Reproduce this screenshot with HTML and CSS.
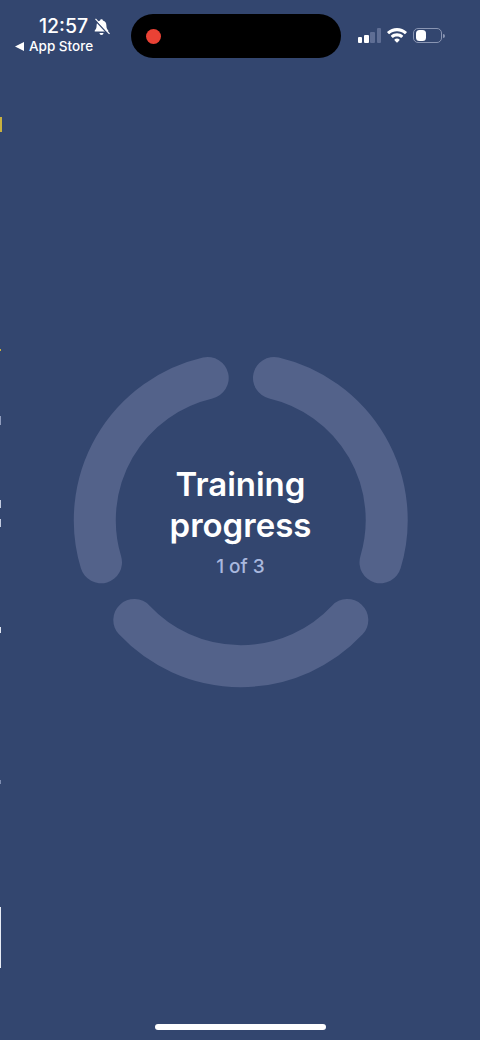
FILE: index.html
```html
<!DOCTYPE html>
<html lang="en">
<head>
<meta charset="utf-8">
<title>Training progress</title>
<link rel="stylesheet" href="styles.css">
</head>
<body>
<div class="page">
  <header class="status">
    <div class="status-left">
      <div class="clock">
        <span class="time">12:57</span>
        <svg class="bell" viewBox="0 0 17 18" aria-hidden="true">
          <path class="fill" d="M8.5 1.2c.8 0 1.3.5 1.4 1.2 2.4.6 3.500 2.600 3.500 5 0 2.600.7 3.800 1.800 5 .4.500.1 1.200-.6 1.200H2.400c-.7 0-1-.7-.6-1.200 1.100-1.200 1.800-2.400 1.800-5 0-2.400 1.100-4.400 3.500-5 .1-.7.6-1.200 1.400-1.200z"/>
          <path class="fill" d="M6.500 15h4c0 1.100-.9 2-2 2s-2-.9-2-2z"/>
          <path class="cut" d="M1.500 1.500l14 15"/>
          <path class="slash" d="M2.500.8l14 15"/>
        </svg>
      </div>
      <div class="back">
        <svg class="back-arrow" viewBox="0 0 8 8" aria-hidden="true"><path d="M8 0v8L0 4z"/></svg>
        <span>App Store</span>
      </div>
    </div>
    <div class="island"><span class="rec"></span></div>
    <div class="status-right">
      <div class="signal">
        <span class="bar b1"></span>
        <span class="bar b2"></span>
        <span class="bar b3 dim"></span>
        <span class="bar b4 dim"></span>
      </div>
      <svg class="wifi" viewBox="0 0 20 15" aria-hidden="true">
        <path d="M10 0c3.700 0 7.100 1.400 9.700 3.800.2.200.2.500 0 .7l-1.500 1.500c-.2.200-.5.200-.7 0C15.500 4.200 12.900 3.200 10 3.200S4.500 4.200 2.500 6c-.2.200-.5.200-.7 0L.3 4.500c-.2-.2-.2-.5 0-.7C2.900 1.400 6.300 0 10 0z"/>
        <path d="M10 5.300c2.300 0 4.400.8 6 2.300.2.200.2.500 0 .7l-1.500 1.500c-.2.200-.5.200-.7 0-1-.9-2.300-1.400-3.800-1.400s-2.800.5-3.800 1.400c-.2.200-.5.200-.7 0L4 8.300c-.2-.2-.2-.5 0-.7 1.600-1.500 3.700-2.300 6-2.300z"/>
        <path d="M10 10.500c1 0 1.900.4 2.500 1 .2.200.2.500 0 .7l-2.100 2.200c-.2.200-.6.200-.8 0l-2.100-2.200c-.2-.2-.2-.5 0-.7.600-.6 1.500-1 2.500-1z"/>
      </svg>
      <div class="battery">
        <div class="battery-body"><span class="battery-level"></span></div>
        <span class="battery-nub"></span>
      </div>
    </div>
  </header>

  <main class="stage">
    <svg class="ring" viewBox="60 340 360 360" aria-hidden="true">
      <path d="M101 562.300A146 146 0 0 1 207.700 378"/>
      <path d="M274 378A146 146 0 0 1 380.500 562.300"/>
      <path d="M347.300 620A146 146 0 0 1 134.300 620"/>
    </svg>
    <div class="caption">
      <h1 class="title">Training<br>progress</h1>
      <p class="count">1 of 3</p>
    </div>
  </main>

  <footer class="home"><span class="home-bar"></span></footer>

  <div class="edge">
    <span class="mark m1"></span>
    <span class="mark m2"></span>
    <span class="mark m3"></span>
    <span class="mark m4"></span>
    <span class="mark m5"></span>
    <span class="mark m6"></span>
    <span class="mark m7"></span>
    <span class="mark m8"></span>
  </div>
</div>
</body>
</html>
```

FILE: styles.css
```css
* { box-sizing: border-box; }
html, body { margin: 0; padding: 0; }
body {
  width: 480px;
  height: 1040px;
  overflow: hidden;
  background: #33466f;
  font-family: Inter, "Liberation Sans", sans-serif;
  color: #fff;
}
.page {
  position: relative;
  display: flex;
  flex-direction: column;
  width: 480px;
  height: 1040px;
}

/* status bar */
.status {
  display: flex;
  align-items: flex-start;
  height: 58px;
  padding: 14px 0 0 15px;
  flex: none;
}
.status-left {
  display: flex;
  flex-direction: column;
  width: 116px;
  flex: none;
}
.clock {
  display: flex;
  align-items: center;
  height: 24px;
  padding: 1px 0 0 24px;
}
.time {
  font-size: 19.500px;
  font-weight: 500;
  line-height: 23px;
}
.bell {
  width: 17px;
  height: 18px;
  margin: 1px 0 0 5px;
  flex: none;
}
.bell .fill { fill: #fff; }
.bell .cut { stroke: #33466f; stroke-width: 1.4; fill: none; }
.bell .slash { stroke: #fff; stroke-width: 1.2; fill: none; }
.back {
  display: flex;
  align-items: center;
  height: 16px;
  font-size: 13.500px;
  font-weight: 500;
  line-height: 16px;
}
.back-arrow {
  width: 9px;
  height: 9px;
  margin: 0 5px 0 0;
  fill: #fff;
  flex: none;
}
.island {
  display: flex;
  align-items: center;
  width: 210px;
  height: 44px;
  padding-left: 15px;
  border-radius: 22px;
  background: #000;
  flex: none;
}
.rec {
  width: 15px;
  height: 15px;
  border-radius: 50%;
  background: #ea4235;
}
.status-right {
  display: flex;
  align-items: flex-end;
  height: 29px;
  margin: 0 0 0 17px;
}
.signal {
  display: flex;
  align-items: flex-end;
  gap: 1.800px;
  height: 15px;
}
.bar { width: 4.400px; border-radius: 1px; background: #fff; }
.b1 { height: 6px; }
.b2 { height: 8px; }
.b3 { height: 11px; }
.b4 { height: 15px; }
.dim { background: #5f6e94; }
.wifi {
  width: 20px;
  height: 15px;
  margin-left: 6px;
  fill: #fff;
  flex: none;
}
.battery {
  display: flex;
  align-items: center;
  height: 15px;
  margin-left: 6px;
}
.battery-body {
  display: flex;
  align-items: center;
  width: 29px;
  height: 15px;
  padding: 0 2px;
  border: 1px solid #8995b3;
  border-radius: 5px;
}
.battery-level {
  width: 10px;
  height: 11px;
  border-radius: 3.500px;
  background: #fff;
}
.battery-nub {
  width: 2px;
  height: 4px;
  margin-left: 1px;
  border-radius: 0 2px 2px 0;
  background: #8995b3;
}

/* ring and caption */
.stage {
  display: grid;
  place-items: center;
  flex: 1;
}
.ring, .caption { grid-area: 1 / 1; }
.ring {
  width: 360px;
  height: 360px;
  fill: none;
  stroke: #53628a;
  stroke-width: 42;
  stroke-linecap: round;
}
.caption {
  display: flex;
  flex-direction: column;
  align-items: center;
  text-align: center;
  margin-top: 1px;
  padding-left: 1px;
}
.title {
  margin: 0;
  font-size: 33px;
  font-weight: 600;
  line-height: 41px;
}
.count {
  margin: 10px 0 0;
  font-size: 19px;
  font-weight: 500;
  line-height: 22px;
  color: #a9b8de;
}

/* home indicator */
.home {
  display: flex;
  justify-content: center;
  height: 58px;
  padding-top: 42px;
  flex: none;
}
.home-bar {
  width: 171px;
  height: 6px;
  border-radius: 3px;
  background: #fff;
}

/* screenshot artefacts on the left edge */
.edge { position: absolute; left: 0; top: 0; }
.mark { position: absolute; left: 0; width: 1px; background: #fff; }
.m1 { top: 117px; height: 15px; width: 2px; background: #c9b13f; }
.m2 { top: 349px; height: 2px; background: #c9b13f; }
.m3 { top: 416px; height: 9px; background: #8f9cbd; }
.m4 { top: 500px; height: 8px; background: #c2cbe0; }
.m5 { top: 519px; height: 8px; background: #c2cbe0; }
.m6 { top: 627px; height: 6px; background: #dfe5f2; }
.m7 { top: 780px; height: 4px; background: #7d8cb0; }
.m8 { top: 907px; height: 61px; background: #e8ecf5; }
```
